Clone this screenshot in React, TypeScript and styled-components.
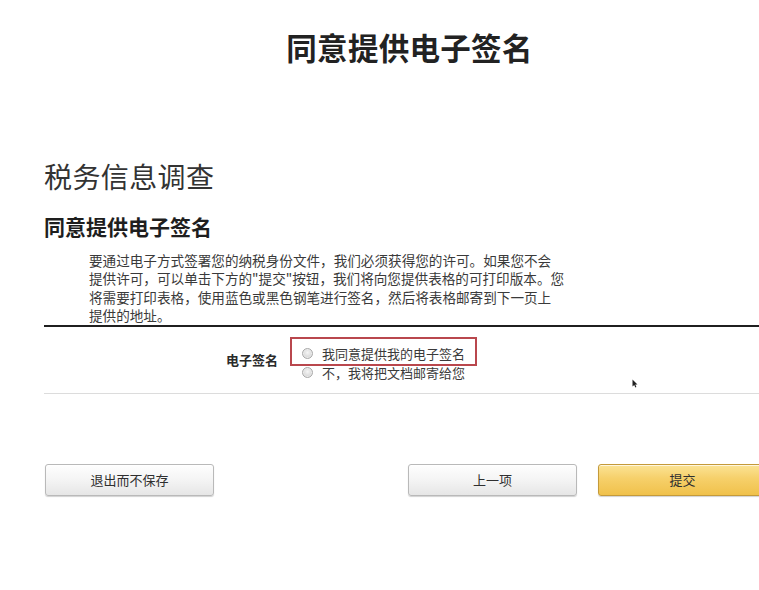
import React, { FC } from "react";
import styled, { createGlobalStyle } from "styled-components";

const GlobalStyle = createGlobalStyle`
  html, body {
    margin: 0;
    padding: 0;
    background: #ffffff;
    overflow: hidden;
  }
  body {
    font-family: "Noto Sans CJK SC", "Noto Sans", sans-serif;
    color: #2b2b2b;
  }
`;

const Page = styled.div`
  position: relative;
  width: 759px;
  height: 590px;
  overflow: hidden;
`;

const Container = styled.div`
  width: 723px;
  margin-left: 44px;
`;

const PageTitle = styled.h1`
  margin: 29px 0 0;
  padding-left: 8px;
  font-size: 30.5px;
  line-height: 36px;
  font-weight: 700;
  text-align: center;
  color: #222;
  letter-spacing: 0.3px;
`;

const SectionTitle = styled.h2`
  margin: 94px 0 0;
  font-size: 28px;
  line-height: 34px;
  font-weight: 400;
  color: #333;
  letter-spacing: 0.4px;
`;

const SubTitle = styled.h3`
  margin: 20px 0 0;
  font-size: 21px;
  line-height: 26px;
  font-weight: 700;
  color: #1e1e1e;
`;

const Intro = styled.p`
  margin: 12px 0 0 45px;
  font-size: 13.6px;
  line-height: 18.4px;
  color: #3a3a3a;
  white-space: nowrap;
`;

const Rule = styled.div<{ $thick?: boolean }>`
  height: ${(p) => (p.$thick ? "2px" : "1px")};
  background: ${(p) => (p.$thick ? "#1f1f1f" : "#dcdcdc")};
  margin-right: -20px;
`;

const FieldRow = styled.div`
  display: grid;
  grid-template-columns: 234px 1fr;
  column-gap: 13px;
  align-items: center;
  height: 66px;
`;

const FieldLabel = styled.div`
  text-align: right;
  font-size: 13px;
  font-weight: 700;
  color: #2a2a2a;
`;

const Options = styled.div`
  display: flex;
  flex-direction: column;
  padding-left: 11px;
  padding-top: 6px;
`;

const Option = styled.label<{ $marked?: boolean }>`
  position: relative;
  display: flex;
  align-items: center;
  gap: 9px;
  height: 19px;
  font-size: 13px;
  color: #3a3a3a;

  ${(p) =>
    p.$marked &&
    `
    &::before {
      content: "";
      position: absolute;
      left: -12px;
      top: -7px;
      width: 183px;
      height: 25px;
      border: 2px solid #b9474d;
    }
  `}
`;

const RadioDot = styled.span`
  width: 9px;
  height: 9px;
  border-radius: 50%;
  border: 1px solid #a9a9a9;
  background: radial-gradient(circle at 50% 40%, #f6f6f6 0%, #d6d6d6 70%, #c4c4c4 100%);
  box-shadow: inset 0 0 0 1px #ececec;
  flex: none;
`;

const ButtonBar = styled.div`
  display: flex;
  justify-content: space-between;
  margin-top: 70px;
  padding-left: 1px;
`;

const ButtonGroup = styled.div`
  display: flex;
  gap: 21px;
`;

const Button = styled.button<{ $primary?: boolean }>`
  width: 169px;
  height: 32px;
  border-radius: 3px;
  font-family: "Noto Sans CJK SC", "Noto Sans", sans-serif;
  font-size: 13px;
  color: #2f2f2f;
  cursor: pointer;
  border: 1px solid ${(p) => (p.$primary ? "#c49a3a" : "#b9b9b9")};
  background: ${(p) =>
    p.$primary
      ? "linear-gradient(to bottom, #fbe395 0%, #f6d06a 45%, #f0c14b 100%)"
      : "linear-gradient(to bottom, #fefefe 0%, #f4f4f4 50%, #e6e6e6 100%)"};
  box-shadow: 0 1px 1px rgba(0, 0, 0, 0.18), inset 0 1px 0 rgba(255, 255, 255, 0.7);
`;

const Pointer = styled.svg`
  position: absolute;
  left: 632px;
  top: 379px;
`;

const App: FC = () => {
  return (
    <Page>
      <GlobalStyle />
      <Container>
        <PageTitle>同意提供电子签名</PageTitle>
        <SectionTitle>税务信息调查</SectionTitle>
        <SubTitle>同意提供电子签名</SubTitle>
        <Intro>
          要通过电子方式签署您的纳税身份文件，我们必须获得您的许可。如果您不会
          <br />
          提供许可，可以单击下方的"提交"按钮，我们将向您提供表格的可打印版本。您
          <br />
          将需要打印表格，使用蓝色或黑色钢笔进行签名，然后将表格邮寄到下一页上
          <br />
          提供的地址。
        </Intro>
        <Rule $thick />
        <FieldRow>
          <FieldLabel>电子签名</FieldLabel>
          <Options>
            <Option $marked>
              <RadioDot />
              我同意提供我的电子签名
            </Option>
            <Option>
              <RadioDot />
              不，我将把文档邮寄给您
            </Option>
          </Options>
        </FieldRow>
        <Rule />
        <ButtonBar>
          <Button>退出而不保存</Button>
          <ButtonGroup>
            <Button>上一项</Button>
            <Button $primary>提交</Button>
          </ButtonGroup>
        </ButtonBar>
      </Container>
      <Pointer width="6" height="9" viewBox="0 0 6 9">
        <path d="M0.5 0.5 L0.5 7.5 L2.2 5.9 L3.4 8.5 L4.4 8 L3.3 5.5 L5.5 5.5 Z" fill="#222" />
      </Pointer>
    </Page>
  );
};

export default App;
